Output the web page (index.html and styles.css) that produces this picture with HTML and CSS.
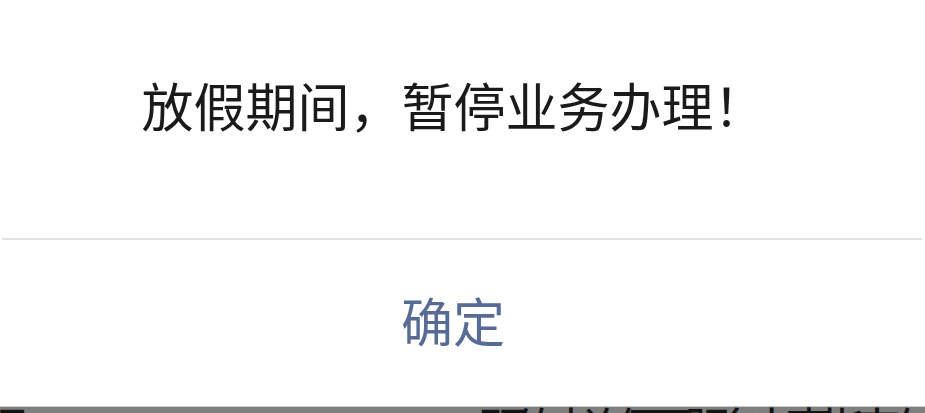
FILE: index.html
```html
<!DOCTYPE html>
<html lang="zh-CN">
<head>
    <meta charset="UTF-8">
    <title>提示</title>
    <meta name="viewport" content="width=device-width, initial-scale=1.0">
    <link rel="stylesheet" href="styles.css">
</head>
<body>
    <div class="dialog">
        <div class="dialog-bd">放假期间，暂停业务办理！</div>
        <div class="dialog-ft">
            <a class="dialog-btn" href="#">确定</a>
        </div>
    </div>
    <div class="page-under">
        <span class="under-left">预</span>
        <span class="under-right">预约查询便民服务办事指南在</span>
    </div>
</body>
</html>
```

FILE: styles.css
```css
html, body {
    margin: 0;
    height: 100%;
    overflow: hidden;
}
body {
    font-family: "Noto Sans CJK SC", "Noto Sans", sans-serif;
    background: #7f7f7f;
}
.dialog {
    background: #fff;
    height: 406px;
    display: flex;
    flex-direction: column;
}
.dialog-bd {
    height: 238px;
    box-sizing: border-box;
    padding: 79px 18px 0 0;
    font-size: 52px;
    line-height: 52px;
    color: #1a1a1a;
    text-align: center;
}
.dialog-ft {
    margin: 0 3px 0 2px;
    border-top: 2px solid #e3e3e3;
    flex: 1;
    display: flex;
    justify-content: center;
    padding: 54px 18px 0 0;
}
.dialog-btn {
    font-size: 52px;
    line-height: 52px;
    height: 52px;
    color: #576b95;
    text-decoration: none;
}
/* the page behind the mask, only its top edge shows */
.page-under {
    border-top: 1px solid #c8c8c8;
    height: 6px;
    overflow: hidden;
    display: flex;
    justify-content: space-between;
    font-size: 48px;
    line-height: 48px;
    color: #141414;
}
.page-under span {
    margin-top: -4px;
}
.under-left {
    margin-left: -22px;
}
.under-right {
    margin-right: 4px;
    letter-spacing: -14px;
}
```
